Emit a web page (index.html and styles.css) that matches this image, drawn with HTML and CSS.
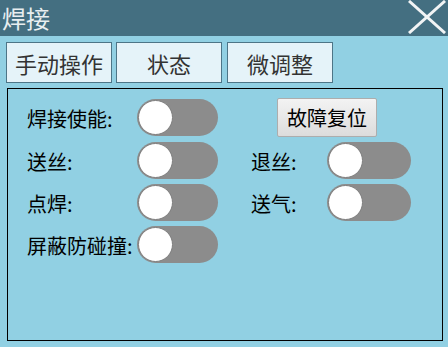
FILE: index.html
```html
<!DOCTYPE html>
<html lang="zh-CN">
<head>
<meta charset="utf-8">
<title>焊接</title>
<link rel="stylesheet" href="styles.css">
</head>
<body>
<div class="window">
  <header class="titlebar">
    <span class="title">焊接</span>
    <svg class="close" width="40" height="34" viewBox="0 0 40 34">
      <line x1="2" y1="1" x2="38" y2="33" />
      <line x1="38" y1="1" x2="2" y2="33" />
    </svg>
  </header>
  <nav class="tabs">
    <div class="tab">手动操作</div>
    <div class="tab">状态</div>
    <div class="tab tab-last">微调整</div>
  </nav>
  <section class="panel">
    <div class="grid">
      <span class="label">焊接使能:</span>
      <span class="toggle"><span class="knob"></span></span>
      <button class="btn">故障复位</button>

      <span class="label">送丝:</span>
      <span class="toggle"><span class="knob"></span></span>
      <span class="label label-r">退丝:</span>
      <span class="toggle"><span class="knob"></span></span>

      <span class="label">点焊:</span>
      <span class="toggle"><span class="knob"></span></span>
      <span class="label label-r">送气:</span>
      <span class="toggle"><span class="knob"></span></span>

      <span class="label">屏蔽防碰撞:</span>
      <span class="toggle"><span class="knob"></span></span>
    </div>
  </section>
</div>
</body>
</html>
```
FILE: styles.css
```css
html, body {
  margin: 0;
  padding: 0;
}
body {
  background: #91d0e3;
  font-family: "Noto Sans CJK SC", "Noto Sans", sans-serif;
  width: 448px;
  height: 347px;
  overflow: hidden;
}
.window {
  display: flex;
  flex-direction: column;
}
.titlebar {
  height: 36px;
  background: #446f81;
  display: flex;
  justify-content: space-between;
  align-items: center;
}
.title {
  font-size: 24px;
  line-height: 1;
  color: #e8eef0;
  padding-left: 2px;
}
.close {
  margin-right: 1px;
  align-self: flex-start;
}
.close line {
  stroke: #f2f4f5;
  stroke-width: 3;
}
.tabs {
  display: flex;
  gap: 4px;
  margin-top: 6px;
  padding-left: 6px;
}
.tab {
  box-sizing: border-box;
  width: 106px;
  height: 41px;
  border: 1px solid #4d7587;
  background: #e5f3f9;
  color: #333;
  font-size: 22px;
  line-height: 1;
  display: flex;
  align-items: center;
  justify-content: center;
}
.tab-last {
  margin-left: 1px;
}
.panel {
  box-sizing: border-box;
  width: 436px;
  height: 253px;
  margin: 5px 0 0 7px;
  border: 1px solid #000;
}
.grid {
  display: grid;
  grid-template-columns: 110px 81px 33px 76px 84px;
  grid-template-rows: 39px 37px 37px 37px;
  row-gap: 5px;
  align-items: center;
  padding: 9px 0 0 19px;
}
.label {
  grid-column: 1;
  font-size: 20px;
  line-height: 1;
  color: #000;
  padding-top: 3px;
}
.label-r {
  grid-column: 4;
}
.toggle {
  box-sizing: border-box;
  height: 37px;
  border-radius: 19px;
  background: #8c8c8c;
  display: flex;
  align-items: center;
  padding-left: 1px;
}
.knob {
  box-sizing: border-box;
  width: 35px;
  height: 35px;
  border-radius: 50%;
  background: #fff;
  border: 1px solid #7e7e7e;
}
.btn {
  grid-column: 4 / 6;
  justify-self: start;
  margin-left: 26px;
  width: 100px;
  height: 39px;
  box-sizing: border-box;
  border: 1px solid #adadad;
  border-radius: 2px;
  background: linear-gradient(#f3f3f3, #dcdcdc);
  font-family: inherit;
  font-size: 20px;
  line-height: 1;
  color: #000;
  padding: 0;
}
```
